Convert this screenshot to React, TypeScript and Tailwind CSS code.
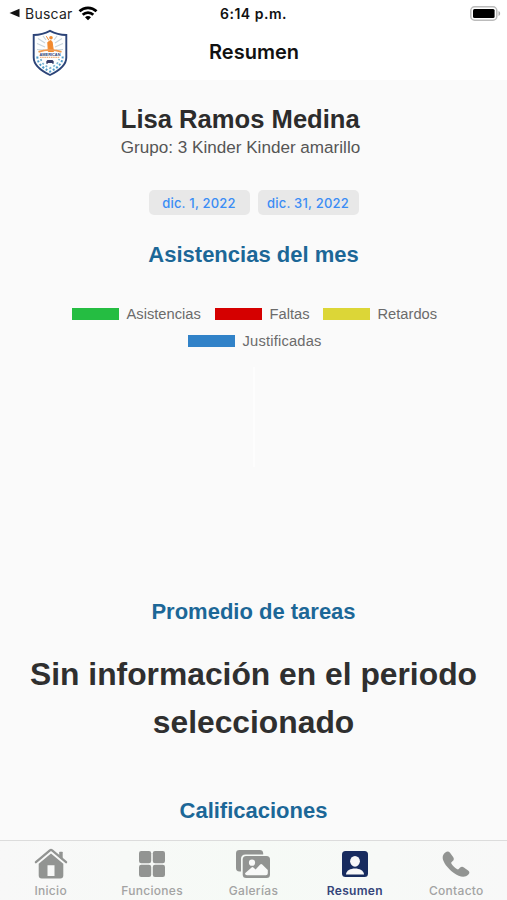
import type { ReactNode } from 'react';

const legend = [
  [
    { label: 'Asistencias', color: 'bg-[#25bd42]', width: 'w-[75px]' },
    { label: 'Faltas', color: 'bg-[#d50000]', width: 'w-[40px]' },
    { label: 'Retardos', color: 'bg-[#dcd637]', width: 'w-[60px]' },
  ],
  [{ label: 'Justificadas', color: 'bg-[#3182c8]', width: 'w-[79px] tracking-[0.2px]' }],
];

const tabs: { label: string; icon: ReactNode; active?: boolean }[] = [
  { label: 'Inicio', icon: <HomeIcon /> },
  { label: 'Funciones', icon: <GridIcon /> },
  { label: 'Galerías', icon: <GalleryIcon /> },
  { label: 'Resumen', icon: <PersonIcon />, active: true },
  { label: 'Contacto', icon: <PhoneIcon /> },
];

function HomeIcon() {
  return (
    <svg width="34" height="32" viewBox="0 0 34 32">
      <path d="M1.900 14.200 15.900 2.400q1.100-.9 2.200 0l14 11.800" fill="none" stroke="currentColor" strokeWidth="2.300" strokeLinecap="round" strokeLinejoin="round" />
      <path d="M25.200 4.300q0-.6.600-.6h2.300q.6 0 .6.600v8l-3.500-3z" fill="currentColor" />
      <path fillRule="evenodd" d="M17 5.400 29.300 15.800V27.500q0 3-3 3H7.700q-3 0-3-3V15.800zM13.500 17.300v10.700h7V17.300z" fill="currentColor" />
    </svg>
  );
}

function GridIcon() {
  return (
    <svg width="28" height="28" viewBox="0 0 28 28" fill="currentColor">
      <rect x="1" y="1" width="12.200" height="12.200" rx="2.200" />
      <rect x="14.800" y="1" width="12.200" height="12.200" rx="2.200" />
      <rect x="1" y="14.800" width="12.200" height="12.200" rx="2.200" />
      <rect x="14.800" y="14.800" width="12.200" height="12.200" rx="2.200" />
    </svg>
  );
}

function GalleryIcon() {
  return (
    <svg width="36" height="30" viewBox="0 0 36 30">
      <path d="M4.500 22.500C2 22.500 1 21.300 1 19V4.500C1 2 2.200 1 4.500 1h20.300c2 0 3.200 1 3.400 3.200v1.300H10.500C7.500 5.500 6 7.200 6 10v12.500z" fill="currentColor" />
      <rect x="7.700" y="7" width="27.300" height="22" rx="3.500" fill="currentColor" />
      <circle cx="17" cy="13.700" r="3.100" fill="#f8f9f8" />
      <path d="m10 24.300 6.600-5.800q.9-.8 1.800 0l2.200 2 4.600-4.900q1-1 2 0l5.600 5.500v3.200q0 2-2 2H12q-2 0-2-2z" fill="#f8f9f8" />
    </svg>
  );
}

function PersonIcon() {
  return (
    <svg width="28" height="28" viewBox="0 0 28 28">
      <rect x="1" y="1" width="26" height="26" rx="3.500" fill="currentColor" />
      <ellipse cx="14" cy="11.300" rx="4.900" ry="5.400" fill="#f8f8f8" />
      <path d="M5 24.500c.2-8 17.800-8 18 0z" fill="#f8f8f8" />
    </svg>
  );
}

function PhoneIcon() {
  return (
    <svg width="28" height="28" viewBox="0 0 28 28">
      <path
        d="M3.300 2.600C5 .9 6.800 1.100 8 2.700l3.100 4.200c1.100 1.600.9 3-.4 4.200l-1.200 1.100c-.5.500-.4.900.1 1.700 1.500 2.100 3.100 3.700 5.300 5.200.8.500 1.300.5 1.800 0l1.200-1.300c1.200-1.200 2.600-1.400 4-.4l4.200 3.100c1.600 1.200 1.700 2.700.3 4.100-3.600 3.600-8.800 2.600-14.900-1.900C5.300 18.200 1 11.700.7 8.200.5 6 1.500 4.100 3.300 2.600z"
        fill="currentColor"
      />
    </svg>
  );
}

function SchoolLogo() {
  return (
    <svg width="38" height="48" viewBox="0 0 38 48">
      <path d="M19 1.800c5 2.600 10.200 4 16.300 4.200v22.500c0 8-6.800 13-16.300 17.500C9.500 41.500 2.700 36.500 2.700 28.500V6C8.800 5.800 14 4.400 19 1.800z" fill="#fdfefe" stroke="#2c4478" strokeWidth="1.900" />
      <path d="m14 18-8-3.500M14 14 7 9.500M15 11l-3-4M24 18l8-3.500M24 14l7-4.500M23 11l3-4M13 21l-7-.5M25 21l7-.5" stroke="#c8d5dc" strokeWidth="1.100" />
      <path d="M15.300 7.200 18 11.500M20 11.500l-3.200 1.800.5 9.200h5.200l-1.400-9.500z" fill="#f28a2e" stroke="#f28a2e" strokeWidth="1" />
      <circle cx="20" cy="8.700" r="1.800" fill="#f28a2e" />
      <path d="M7.500 22.800q11.500-4 23 0" fill="none" stroke="#ef9b51" strokeWidth="1.800" />
      <text x="19" y="26.600" textAnchor="middle" textLength="21" lengthAdjust="spacingAndGlyphs" className="fill-[#2c4478] font-['Liberation_Sans'] text-[4px] font-bold">AMERICAN</text>
      <path d="M9 28.300h20" stroke="#f0b27e" strokeWidth="1.200" strokeDasharray="1.500 .7" />
      <path d="M16.500 31h5l1.200 1.200v2.600h-1.500v-.9h-4.400v.9h-1.500v-2.600z" fill="#353c69" />
      <path d="M6.300 27.500c.3 7.500 5 11 12.700 15.200 7.700-4.200 12.400-7.700 12.700-15.200" fill="none" stroke="#4e9bc9" strokeWidth="2" strokeDasharray="2 2" />
      <path d="M9.800 30c1 4.500 3.600 6.500 9.200 9.200 5.600-2.700 8.200-4.700 9.200-9.200" fill="none" stroke="#78b4d3" strokeWidth="1.700" strokeDasharray="2 2.300" />
    </svg>
  );
}

function StatusBar() {
  return (
    <div className="grid h-[26px] grid-cols-3 items-center">
      <div className="flex items-center pl-[9px]">
        <svg width="11" height="10" viewBox="0 0 11 10">
          <path d="M.5 5 10.500.8v8.400z" fill="#111" />
        </svg>
        <span className="ml-[5px] w-12 text-[14px] tracking-[0.25px] text-[#222]">Buscar</span>
        <svg className="ml-[5px]" width="20" height="15" viewBox="0 0 20 15" fill="none" stroke="#000" strokeWidth="2.700">
          <path d="M1.500 5.300c4.800-4.700 12.200-4.700 17 0M4.700 8.800c3-2.900 7.600-2.900 10.600 0" />
          <path d="m10 14.300-3-3.100c1.700-1.500 4.300-1.500 6 0z" fill="#000" stroke="none" />
        </svg>
      </div>
      <div className="text-center text-[14px] font-semibold tracking-[0.5px] whitespace-nowrap text-[#111]">6:14 p.m.</div>
      <svg className="mr-[6px] justify-self-end" width="31" height="15" viewBox="0 0 31 15">
        <rect x=".8" y=".8" width="26" height="13.400" rx="3.800" fill="#fff" stroke="#bbb" strokeWidth="1.500" />
        <rect x="3" y="3" width="21.600" height="9" rx="1.500" fill="#000" />
        <path d="M28.500 5v5c2.200-.8 2.200-4.200 0-5z" fill="#aaa" />
      </svg>
    </div>
  );
}

function SectionTitle({ children }: { children: ReactNode }) {
  return <h2 className="text-center text-[22px] leading-[26px] font-bold text-[#1c6797]">{children}</h2>;
}

export default function App() {
  return (
    <div className="flex h-[900px] w-[507px] flex-col overflow-hidden bg-[#fafafa] font-['Liberation_Sans',sans-serif]">
      <header className="h-20 shrink-0 bg-white font-['Inter',sans-serif]">
        <StatusBar />
        <div className="grid h-[52px] grid-cols-3 items-center">
          <div className="pt-[2px] pl-[31px]">
            <SchoolLogo />
          </div>
          <h1 className="pl-px text-center text-[20px] font-semibold text-[#111]">Resumen</h1>
        </div>
      </header>

      <main className="flex min-h-0 flex-1 flex-col items-center">
        <div className="mt-6 mr-[26px] whitespace-nowrap">
          <div className="text-[25.600px] leading-[30px] font-bold text-[#2c2c2c]">Lisa Ramos Medina</div>
          <div className="pt-px text-[17.100px] leading-[26px] text-[#555]">Grupo: 3 Kinder Kinder amarillo</div>
        </div>

        <div className="mt-[29px] flex gap-2 font-['Inter',sans-serif] text-[13px] font-medium text-[#3b8df5]">
          {['dic. 1, 2022', 'dic. 31, 2022'].map((date) => (
            <button key={date} className="h-[25px] w-[101px] rounded-[5px] bg-[#e8e8e8] pt-[2px] tracking-[0.2px] whitespace-nowrap">
              {date}
            </button>
          ))}
        </div>

        <div className="mt-[27px]">
          <SectionTitle>Asistencias del mes</SectionTitle>
        </div>

        <div className="mt-[33px] flex flex-col items-center pl-[2px] text-[14.700px] text-[#6b6b6b]">
          {legend.map((row, i) => (
            <div key={i} className="flex h-[27px] items-center gap-[13px]">
              {row.map((item) => (
                <div key={item.label} className="flex items-center gap-2">
                  <span className={`h-3 w-[47px] ${item.color}`} />
                  <span className={`whitespace-nowrap ${item.width}`}>{item.label}</span>
                </div>
              ))}
            </div>
          ))}
        </div>

        {/* empty chart area */}
        <div className="flex h-[244px] justify-center pt-3">
          <div className="h-[100px] w-[2px] bg-[#fdfdfd]" />
        </div>

        <SectionTitle>Promedio de tareas</SectionTitle>
        <p className="mt-[25px] w-[470px] text-center text-[31.800px] leading-12 font-bold text-[#2f2f2f]">
          Sin información en el periodo seleccionado
        </p>
        <div className="mt-[52px]">
          <SectionTitle>Calificaciones</SectionTitle>
        </div>
      </main>

      <nav className="grid h-[60px] shrink-0 grid-cols-5 border-t border-[#dcdcdc] bg-linear-to-r from-[#f8f8f8] via-[#f6faf6] to-[#f8f8f8] font-['Inter',sans-serif]">
        {tabs.map((tab) => (
          <div key={tab.label} className={`flex flex-col items-center ${tab.active ? 'text-[#182c5f]' : 'text-[#929492]'}`}>
            <div className="flex h-[42px] items-center pt-[3px]">{tab.icon}</div>
            <span className={`text-[12px] leading-4 tracking-[0.3px] ${tab.active ? 'font-semibold text-[#35457a]' : 'font-medium text-[#a3a3a3]'}`}>
              {tab.label}
            </span>
          </div>
        ))}
      </nav>
    </div>
  );
}
